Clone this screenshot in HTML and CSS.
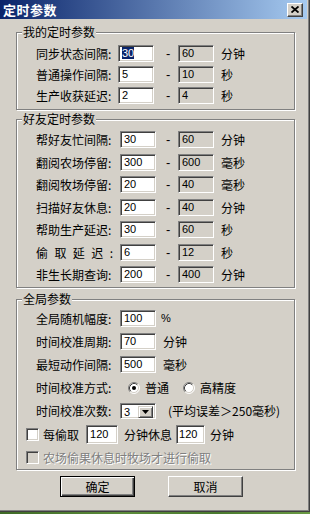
FILE: index.html
```html
<!DOCTYPE html>
<html lang="zh">
<head>
<meta charset="utf-8">
<title>定时参数</title>
<link rel="stylesheet" href="styles.css">
</head>
<body>
<div class="window">
  <div class="titlebar">
    <span class="title">定时参数</span>
    <span class="close"><svg width="8" height="7" viewBox="0 0 8 7"><path d="M0.5 0.5L7.5 6.5M7.5 0.5L0.5 6.5" stroke="#000" stroke-width="1.8"/></svg></span>
  </div>

  <section class="group g1">
    <div class="legend">我的定时参数</div>
    <div class="rows">
      <div class="row"><span class="lbl">同步状态间隔:</span><span class="edit"><span class="hl">30</span></span><span class="dash">-</span><span class="edit ro">60</span><span class="unit">分钟</span></div>
      <div class="row"><span class="lbl">普通操作间隔:</span><span class="edit">5</span><span class="dash">-</span><span class="edit ro">10</span><span class="unit">秒</span></div>
      <div class="row"><span class="lbl">生产收获延迟:</span><span class="edit">2</span><span class="dash">-</span><span class="edit ro">4</span><span class="unit">秒</span></div>
    </div>
  </section>

  <section class="group g2">
    <div class="legend">好友定时参数</div>
    <div class="rows">
      <div class="row"><span class="lbl">帮好友忙间隔:</span><span class="edit">30</span><span class="dash">-</span><span class="edit ro">60</span><span class="unit">分钟</span></div>
      <div class="row"><span class="lbl">翻阅农场停留:</span><span class="edit">300</span><span class="dash">-</span><span class="edit ro">600</span><span class="unit">毫秒</span></div>
      <div class="row"><span class="lbl">翻阅牧场停留:</span><span class="edit">20</span><span class="dash">-</span><span class="edit ro">40</span><span class="unit">毫秒</span></div>
      <div class="row"><span class="lbl">扫描好友休息:</span><span class="edit">20</span><span class="dash">-</span><span class="edit ro">40</span><span class="unit">分钟</span></div>
      <div class="row"><span class="lbl">帮助生产延迟:</span><span class="edit">30</span><span class="dash">-</span><span class="edit ro">60</span><span class="unit">秒</span></div>
      <div class="row"><span class="lbl"><span class="spread">偷取延迟:</span></span><span class="edit">6</span><span class="dash">-</span><span class="edit ro">12</span><span class="unit">秒</span></div>
      <div class="row"><span class="lbl">非生长期查询:</span><span class="edit">200</span><span class="dash">-</span><span class="edit ro">400</span><span class="unit">分钟</span></div>
    </div>
  </section>

  <section class="group g3">
    <div class="legend">全局参数</div>
    <div class="rows">
      <div class="row"><span class="lbl">全局随机幅度:</span><span class="edit">100</span><span class="unit u3 pct">%</span></div>
      <div class="row"><span class="lbl">时间校准周期:</span><span class="edit">70</span><span class="unit u3">分钟</span></div>
      <div class="row"><span class="lbl">最短动作间隔:</span><span class="edit">500</span><span class="unit u3">毫秒</span></div>
      <div class="row"><span class="lbl">时间校准方式:</span>
        <span class="radio first"><svg width="12" height="12" viewBox="0 0 12 12"><circle cx="6" cy="6" r="5" fill="#fff"/><path d="M2.11 9.89A5.5 5.5 0 0 1 9.89 2.11" fill="none" stroke="#808080"/><path d="M9.89 2.11A5.5 5.5 0 0 1 2.11 9.89" fill="none" stroke="#fff"/><path d="M2.82 9.18A4.5 4.5 0 0 1 9.18 2.82" fill="none" stroke="#404040"/><path d="M9.18 2.82A4.5 4.5 0 0 1 2.82 9.18" fill="none" stroke="#d4d0c8"/><circle cx="6" cy="6" r="2" fill="#000"/></svg></span><span class="rtext">普通</span>
        <span class="radio second"><svg width="12" height="12" viewBox="0 0 12 12"><circle cx="6" cy="6" r="5" fill="#fff"/><path d="M2.11 9.89A5.5 5.5 0 0 1 9.89 2.11" fill="none" stroke="#808080"/><path d="M9.89 2.11A5.5 5.5 0 0 1 2.11 9.89" fill="none" stroke="#fff"/><path d="M2.82 9.18A4.5 4.5 0 0 1 9.18 2.82" fill="none" stroke="#404040"/><path d="M9.18 2.82A4.5 4.5 0 0 1 2.82 9.18" fill="none" stroke="#d4d0c8"/></svg></span><span class="rtext">高精度</span>
      </div>
      <div class="row"><span class="lbl">时间校准次数:</span><span class="combo"><span class="cval">3</span><span class="ddbtn"><svg width="7" height="4" viewBox="0 0 7 4"><path d="M0 0H7L3.5 4Z" fill="#000"/></svg></span></span><span class="note">(平均误差＞250毫秒)</span></div>
      <div class="row crow"><span class="check"></span><span class="ctext">每偷取</span><span class="edit e2 w1">120</span><span class="mid">分钟休息</span><span class="edit e2 w2">120</span><span class="tail">分钟</span></div>
      <div class="row drow"><span class="check dis"></span><span class="ctext distext">农场偷果休息时牧场才进行偷取</span></div>
    </div>
  </section>

  <div class="buttons">
    <span class="btn default">确定</span>
    <span class="btn">取消</span>
  </div>
</div>
</body>
</html>
```

FILE: styles.css
```css
* { box-sizing: border-box; margin: 0; padding: 0; }
html, body { width: 310px; height: 514px; overflow: hidden; }
body {
  background: linear-gradient(90deg, #3e6a26, #5c8c3a 40%, #4a7a2e 70%, #6a9a44);
  font-family: "Liberation Sans", "Noto Sans CJK SC", sans-serif;
  font-size: 12px;
  color: #000;
}
.window {
  width: 310px;
  height: 512px;
  padding-right: 3px;
  background: #d4d0c8;
  box-shadow: inset -1px -1px 0 #404040, inset -2px -2px 0 #808080;
  display: flex;
  flex-direction: column;
}
.titlebar {
  height: 19px;
  background: linear-gradient(90deg, #0a246a, #a6caf0);
  display: flex;
  align-items: center;
  padding: 0 4px 0 3px;
}
.title {
  color: #fff;
  font-weight: bold;
  font-size: 13px;
  line-height: 19px;
  letter-spacing: 0.5px;
  font-family: "Noto Sans CJK SC", sans-serif;
}
.close {
  margin-left: auto;
  width: 16px;
  height: 14px;
  background: #d4d0c8;
  border: 1px solid;
  border-color: #fff #404040 #404040 #fff;
  box-shadow: inset -1px -1px 0 #808080;
  display: flex;
  align-items: center;
  justify-content: center;
}
.close svg { display: block; }

.group {
  width: 279px;
  margin-left: 16px;
  border: 1px solid #808080;
  box-shadow: inset 1px 1px 0 #fff, 1px 1px 0 #fff;
  display: flex;
  flex-direction: column;
}
.legend {
  align-self: flex-start;
  margin: -8px 0 0 5px;
  padding: 0 1px;
  background: #d4d0c8;
  line-height: 14px;
  height: 14px;
  font-family: "Noto Sans CJK SC", sans-serif;
}
.g1 { margin-top: 13px; padding-bottom: 5px; }
.g2 { margin-top: 9px; padding-bottom: 4px; }
.g3 { margin-top: 11px; padding-bottom: 5px; }
.rows { display: flex; flex-direction: column; padding-left: 9px; }
.g1 .rows { margin-top: 6px; gap: 4px; }
.g2 .rows { margin-top: 5px; gap: 5.5px; }
.g3 .rows { margin-top: 4px; gap: 6px; }

.row {
  display: flex;
  align-items: center;
  height: 17px;
  line-height: 17px;
  padding-left: 10px;
}
.lbl {
  width: 84px;
  font-family: "Noto Sans CJK SC", sans-serif;
  white-space: nowrap;
}
.g1 .lbl { width: 82px; }
.spread {
  display: inline-block;
  width: 77px;
  text-align: justify;
  text-align-last: justify;
}
.edit {
  width: 36px;
  height: 17px;
  background: #fff;
  border: 1px solid;
  border-color: #808080 #fff #fff #808080;
  box-shadow: inset 1px 1px 0 #404040, inset -1px -1px 0 #d4d0c8;
  font-size: 11px;
  line-height: 15px;
  padding-left: 3px;
  white-space: nowrap;
}
.edit.ro { background: #d4d0c8; }
.hl { background: #0a246a; color: #fff; display: inline-block; line-height: 12px; padding: 0 0 0 0; }
.dash {
  width: 24px;
  padding-left: 12px;
  font-size: 13px;
}
.g2 .dash { width: 22px; padding-left: 10px; }
.unit {
  margin-left: 7px;
  font-family: "Noto Sans CJK SC", sans-serif;
}
.u3 { margin-left: 7px; }
.pct { margin-left: 5px; font-family: "Liberation Sans", sans-serif; font-size: 11px; }

.radio { display: flex; width: 12px; height: 12px; }
.radio svg { display: block; }
.radio.first { margin-left: 8px; }
.radio.second { margin-left: 14px; }
.rtext { margin-left: 5px; font-family: "Noto Sans CJK SC", sans-serif; }

.combo {
  width: 36px;
  height: 16px;
  background: #fff;
  border: 1px solid;
  border-color: #808080 #fff #fff #808080;
  box-shadow: inset 1px 1px 0 #404040, inset -1px -1px 0 #d4d0c8;
  display: flex;
  align-items: stretch;
  padding: 2px 2px 1px 3px;
  font-size: 11px;
  line-height: 12px;
}
.cval { flex: 1; }
.ddbtn {
  width: 15px;
  height: 12px;
  background: #d4d0c8;
  border: 1px solid;
  border-color: #d4d0c8 #404040 #404040 #d4d0c8;
  box-shadow: inset 1px 1px 0 #fff, inset -1px -1px 0 #808080;
  display: flex;
  align-items: center;
  justify-content: center;
}
.ddbtn svg { display: block; }
.note { margin-left: 12px; font-family: "Noto Sans CJK SC", sans-serif; white-space: nowrap; }

.crow { height: 19px; padding-left: 0; }
.drow { height: 14px; padding-left: 0; }
.check {
  width: 13px;
  height: 13px;
  background: #fff;
  border: 1px solid;
  border-color: #808080 #fff #fff #808080;
  box-shadow: inset 1px 1px 0 #404040, inset -1px -1px 0 #d4d0c8;
}
.check.dis { background: #d4d0c8; }
.ctext { margin-left: 4px; font-family: "Noto Sans CJK SC", sans-serif; white-space: nowrap; }
.distext { color: #808080; text-shadow: 1px 1px 0 #fff; }
.e2 { height: 19px; line-height: 17px; }
.w1 { width: 32px; margin-left: 7px; }
.w2 { width: 29px; margin-left: 4px; padding-left: 2px; }
.mid { margin-left: 6px; font-family: "Noto Sans CJK SC", sans-serif; }
.tail { margin-left: 5px; font-family: "Noto Sans CJK SC", sans-serif; }

.buttons {
  display: flex;
  gap: 33px;
  margin: 6px 0 0 60px;
}
.btn {
  width: 75px;
  height: 21px;
  background: #d4d0c8;
  border: 1px solid;
  border-color: #fff #404040 #404040 #fff;
  box-shadow: inset -1px -1px 0 #808080;
  display: flex;
  align-items: center;
  justify-content: center;
  font-family: "Noto Sans CJK SC", sans-serif;
}
.btn.default {
  border: 1px solid #000;
  box-shadow: inset 1px 1px 0 #fff, inset -1px -1px 0 #404040, inset -2px -2px 0 #808080;
}
```
